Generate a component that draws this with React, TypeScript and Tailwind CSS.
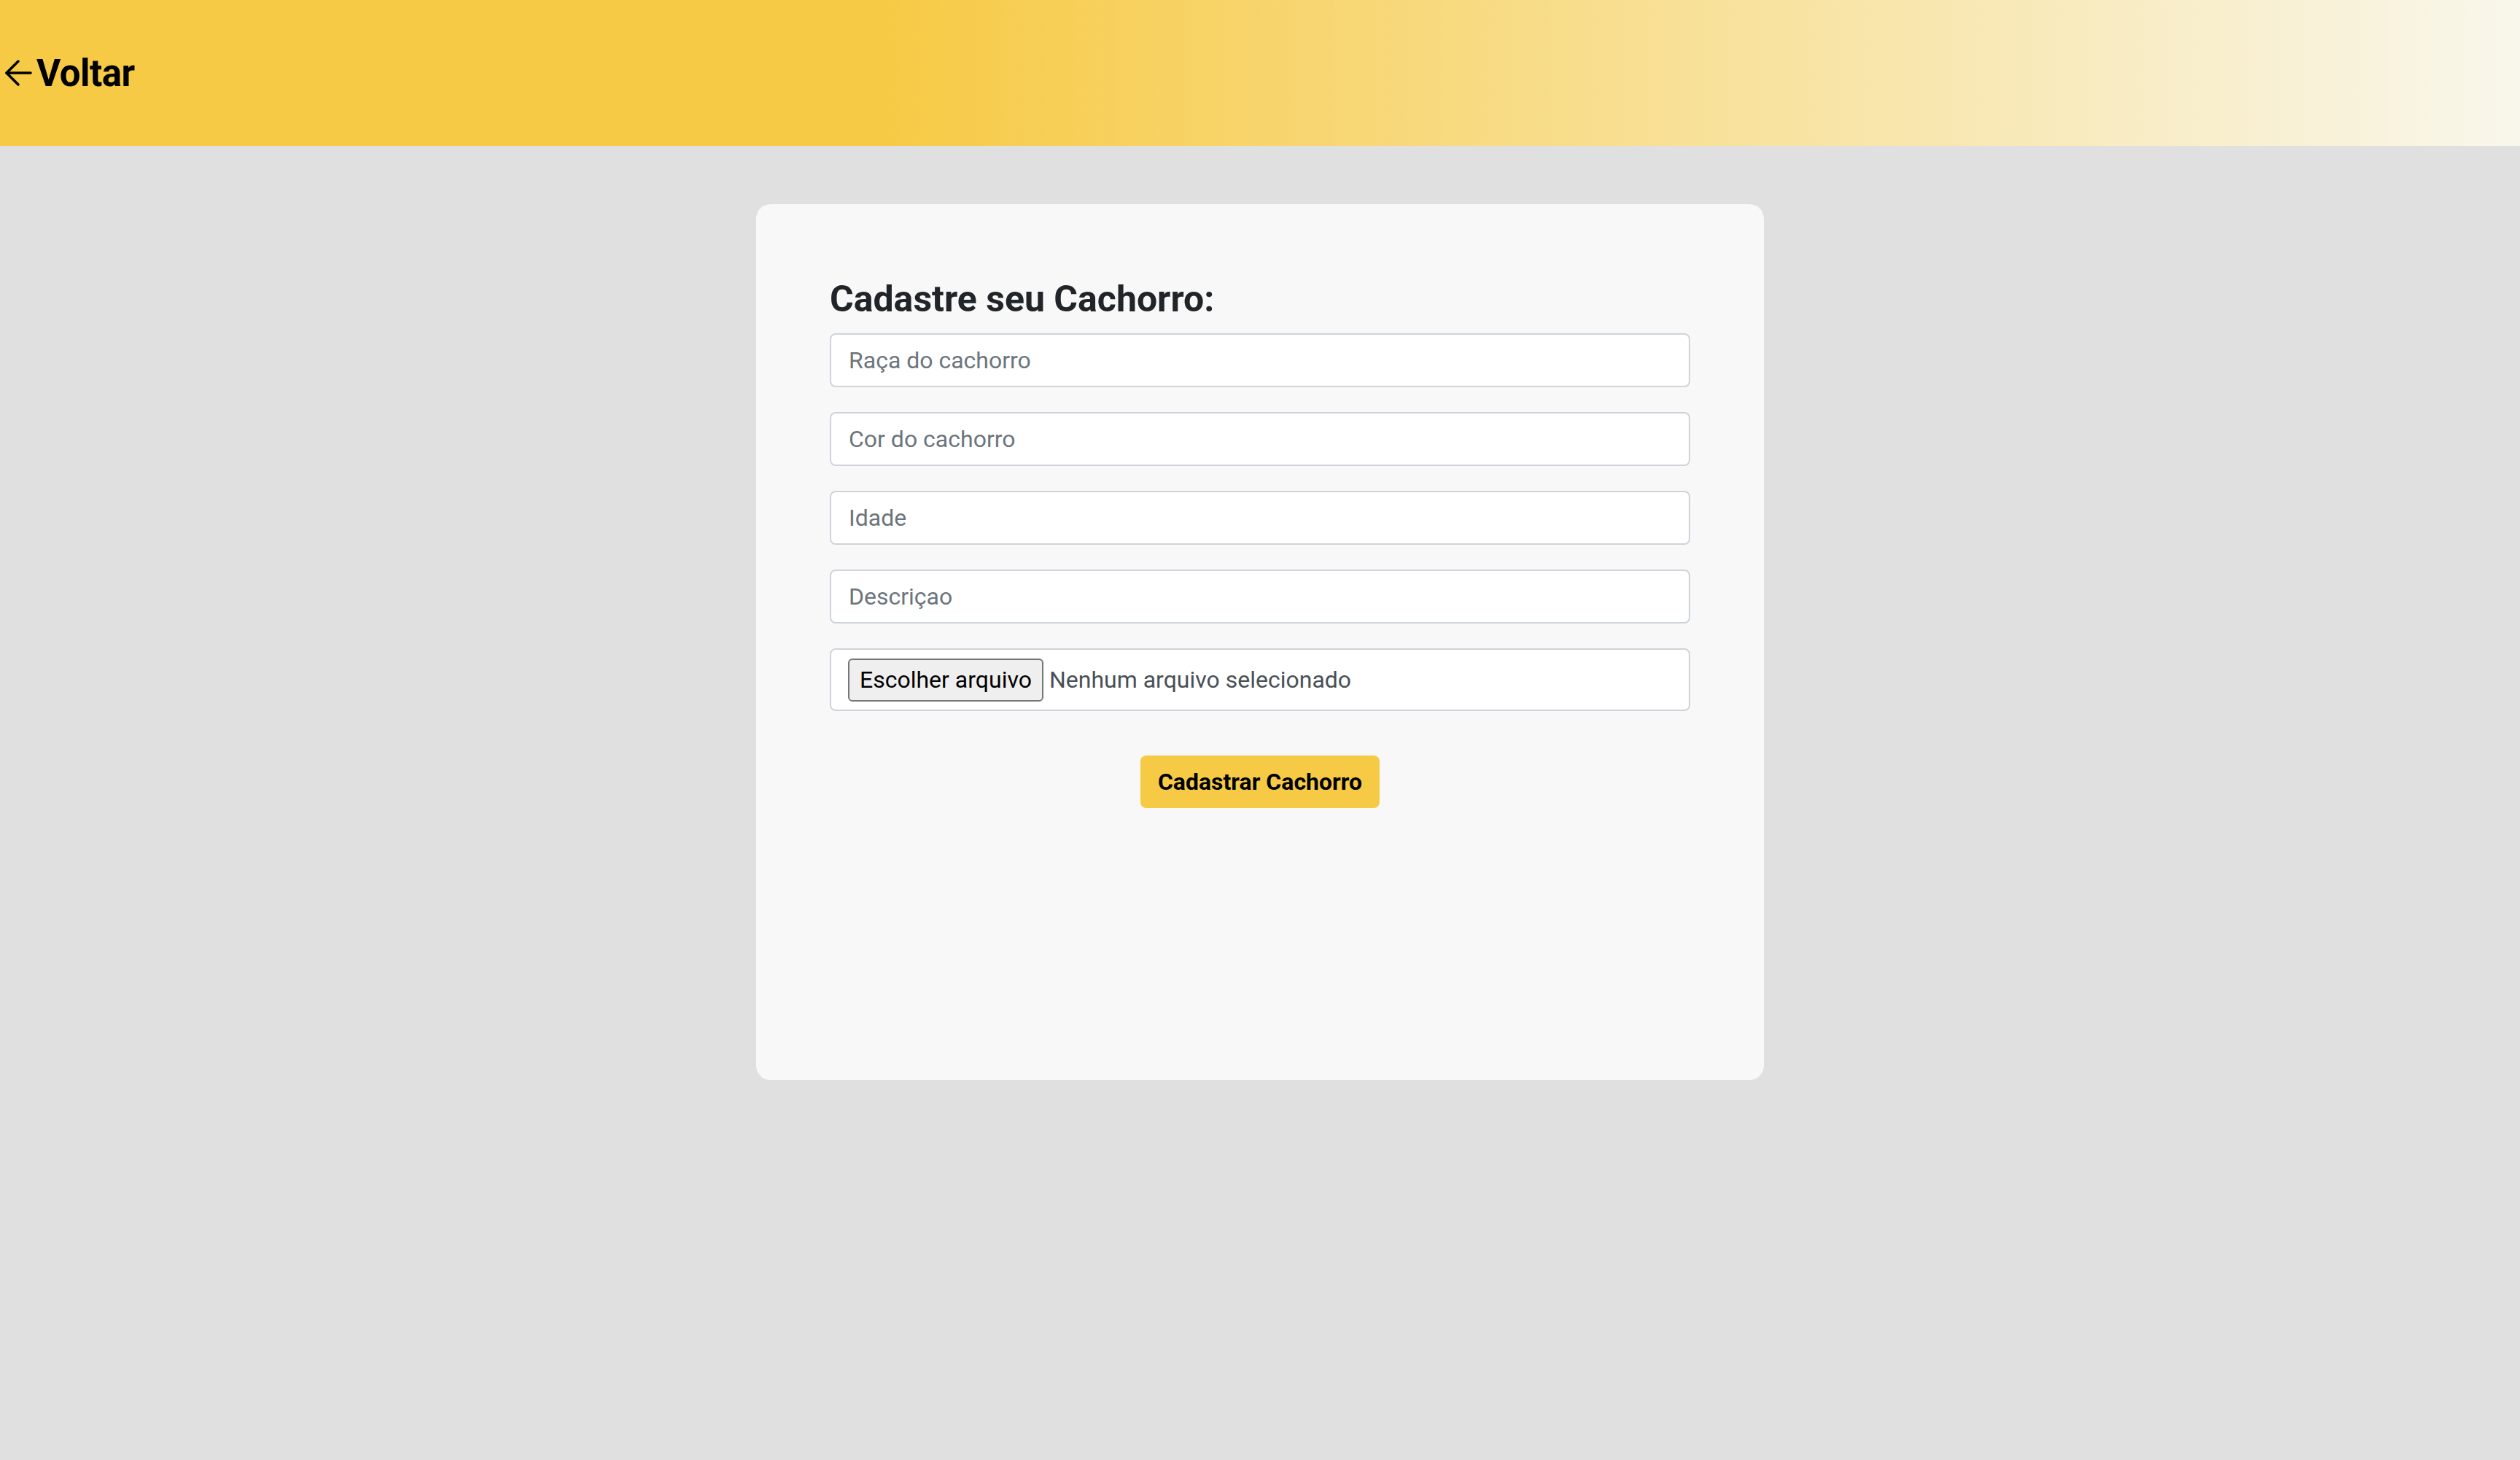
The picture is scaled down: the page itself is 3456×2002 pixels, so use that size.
import { useState } from "react";

const fields = ["Raça do cachorro", "Cor do cachorro", "Idade", "Descriçao"];

export default function App() {
  const [values, setValues] = useState<string[]>(["", "", "", ""]);
  const [fileName, setFileName] = useState("");

  const update = (i: number, v: string) => {
    const next = [...values];
    next[i] = v;
    setValues(next);
  };

  return (
    <div className="min-h-[2002px] bg-[#e0e0e0] font-['Roboto','Liberation_Sans',sans-serif]">
      <header className="h-[200px] flex items-center pl-[6px] bg-[linear-gradient(to_right,#f7ca45_35%,#f9f7ec)]">
        <button className="flex items-center gap-[6px] text-black">
          <svg width="38" height="38" viewBox="0 0 38 38" fill="none" stroke="black" strokeWidth="3.5" strokeLinecap="round" strokeLinejoin="round">
            <path d="M36 19H3" />
            <path d="M19 3 3 19l16 16" />
          </svg>
          <span className="text-[51px] font-bold leading-none tracking-[-0.5px]">Voltar</span>
        </button>
      </header>

      <main className="flex justify-center pt-[80px]">
        <div className="w-[1382px] h-[1201px] bg-[#f8f8f8] rounded-[20px] px-[101px] pt-[101px]">
          <h2 className="text-[50px] leading-[58px] font-bold text-[#212529] mb-[18px]">Cadastre seu Cachorro:</h2>
          <form className="flex flex-col gap-[34px]" onSubmit={(e) => e.preventDefault()}>
            {fields.map((f, i) => (
              <input
                key={f}
                className="h-[74px] w-full bg-white border-2 border-[#ced4da] rounded-[8px] px-[24px] text-[32px] text-[#212529] placeholder:text-[#6c757d] outline-none"
                placeholder={f}
                value={values[i]}
                onChange={(e) => update(i, e.target.value)}
              />
            ))}
            <label className="h-[86px] w-full bg-white border-2 border-[#ced4da] rounded-[8px] pl-[23px] flex items-center gap-[8px] cursor-pointer">
              <span className="h-[59px] px-[14px] flex items-center bg-[#efefef] border-2 border-[#767676] rounded-[6px] text-[32px] text-black">
                Escolher arquivo
              </span>
              <span className="text-[32px] text-[#495057]">{fileName || "Nenhum arquivo selecionado"}</span>
              <input
                type="file"
                className="hidden"
                onChange={(e) => setFileName(e.target.files?.[0]?.name ?? "")}
              />
            </label>
            <div className="flex justify-center mt-[27px]">
              <button
                type="submit"
                className="w-[328px] h-[72px] bg-[#f7ca45] rounded-[8px] text-[32px] font-bold text-black"
              >
                Cadastrar Cachorro
              </button>
            </div>
          </form>
        </div>
      </main>
    </div>
  );
}
